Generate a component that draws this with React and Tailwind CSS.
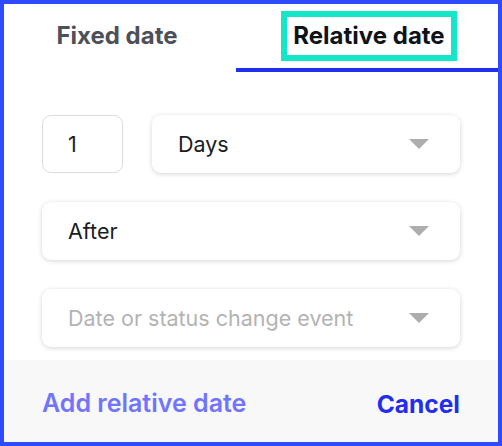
import React, { useState } from "react";

const Caret = () => (
  <svg width="20" height="10" viewBox="0 0 20 10" className="shrink-0">
    <path d="M0 0 L20 0 L10 10 Z" fill="#adadad" />
  </svg>
);

const SelectBox = ({ label, placeholder, className = "" }) => (
  <div
    className={`h-[58px] bg-white rounded-[9px] shadow-[0_1px_5px_rgba(0,0,0,0.17)] flex items-center justify-between pl-[26px] pr-[31px] ${className}`}
  >
    <span className={`text-[21.5px] ${placeholder ? "text-[#b3b3b3]" : "text-[#1a1d22]"}`}>
      {label}
    </span>
    <Caret />
  </div>
);

const App = () => {
  const [tab, setTab] = useState("relative");

  return (
    <div
      className="w-[502px] h-[446px] border-4 border-[#2f4bff] bg-white flex flex-col"
      style={{ fontFamily: "Inter, 'Noto Sans', sans-serif" }}
    >
      {/* tabs */}
      <div className="flex h-[68px] shrink-0">
        <button
          onClick={() => setTab("fixed")}
          className="w-[232px] pr-[6px] border-b-4 border-transparent flex items-center justify-center text-[24px] font-bold text-[#4d5058]"
        >
          Fixed date
        </button>
        <button
          onClick={() => setTab("relative")}
          className="flex-1 border-b-4 border-[#1f30ea] flex items-center justify-center pl-[4px]"
        >
          <span className="border-[6px] border-[#14e6ca] px-[6px] leading-[38px] text-[24px] font-bold text-[#0e131a]">
            Relative date
          </span>
        </button>
      </div>

      {/* fields */}
      <div className="px-[38px] pt-[43px] pb-[13px] flex flex-col gap-[29px]">
        <div className="flex gap-[29px]">
          <div className="w-[81px] h-[58px] border border-[#dcdcdc] rounded-[9px] flex items-center pl-[25px] text-[21.5px] text-[#1a1d22]">
            1
          </div>
          <SelectBox label="Days" className="flex-1" />
        </div>
        <SelectBox label="After" className="h-[57px]" />
        <SelectBox label="Date or status change event" placeholder />
      </div>

      {/* footer */}
      <div className="flex-1 bg-[#f8f8f8] flex items-center justify-between px-[38px] pt-[6px]">
        <button className="text-[25px] font-semibold text-[#7074ff]">Add relative date</button>
        <button className="text-[24.5px] font-bold text-[#1f2ef0]">Cancel</button>
      </div>
    </div>
  );
};

export default App;
